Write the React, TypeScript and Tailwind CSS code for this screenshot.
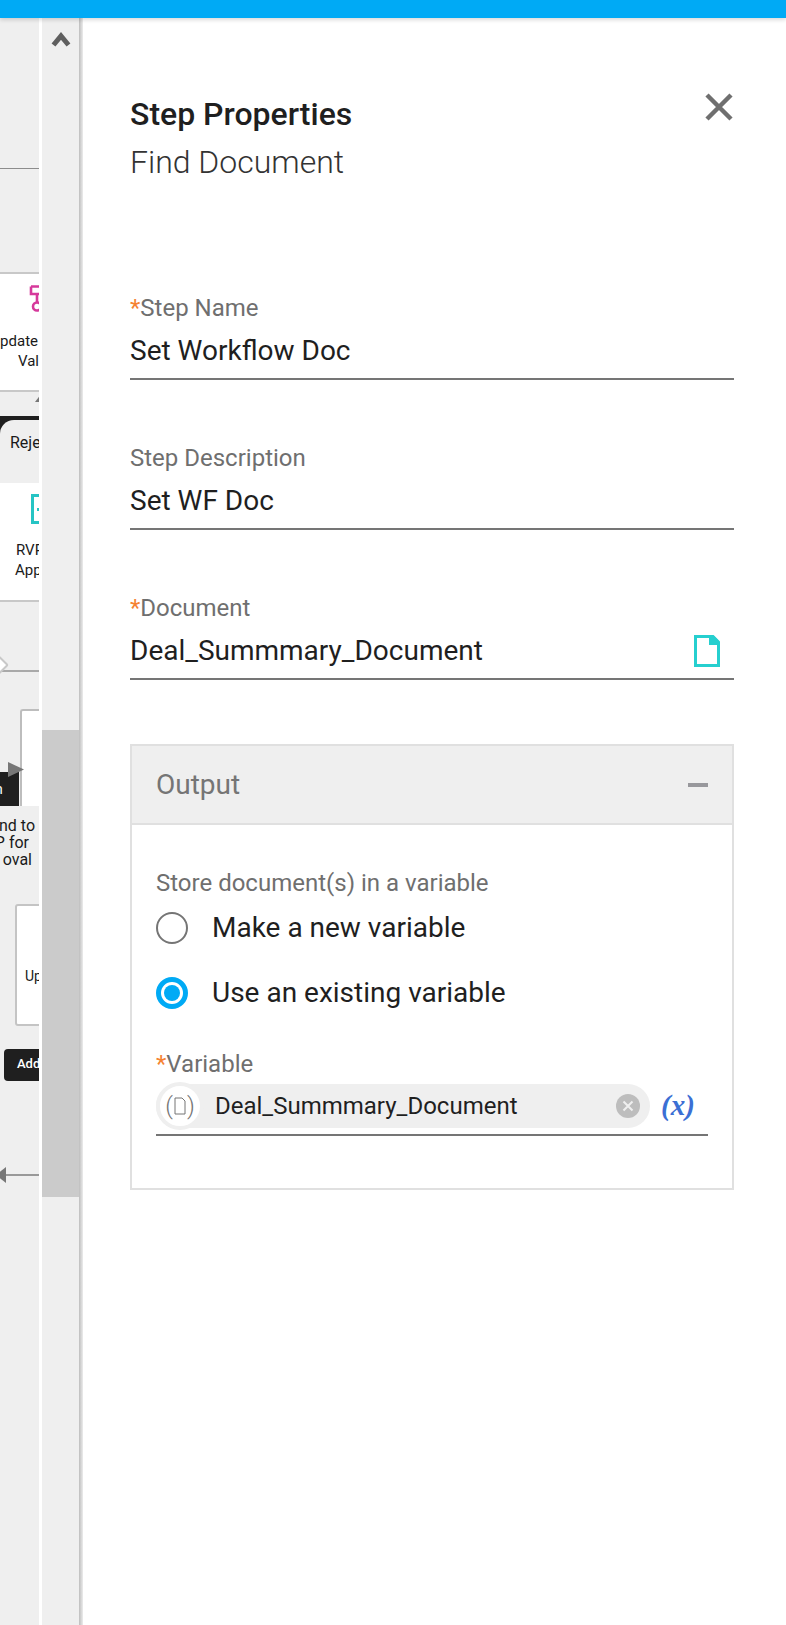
import React from "react";

const Req = () => <span className="text-[#f58232]">*</span>;

const Field = ({ label, value, required, icon }: { label: string; value: string; required?: boolean; icon?: React.ReactNode }) => (
  <div className="flex flex-col">
    <label className="text-[24px] leading-[28px] text-[#6f6f6f]">
      {required && <Req />}
      {label}
    </label>
    <div className="flex h-[58px] items-center justify-between border-b-2 border-[#757575] pt-[2px] text-[28px] text-[#1f1f1f]">
      <span>{value}</span>
      {icon}
    </div>
  </div>
);

const DocIcon = () => (
  <svg width="26" height="32" viewBox="0 0 26 32" className="mr-[14px]">
    <path d="M1.5 1.5H19L24.5 7V30.5H1.5Z" fill="none" stroke="#26cfcf" strokeWidth="3" />
    <path d="M15 1H20L25 6V10H15Z" fill="#26cfcf" />
  </svg>
);

const Radio = ({ label, checked }: { label: string; checked?: boolean }) => (
  <div className="flex h-[65px] items-center gap-[24px]">
    {checked ? (
      <span className="flex h-[32px] w-[32px] items-center justify-center rounded-full border-[5px] border-[#00aaf5]">
        <span className="h-[16px] w-[16px] rounded-full bg-[#00aaf5]" />
      </span>
    ) : (
      <span className="h-[32px] w-[32px] rounded-full border-2 border-[#757575]" />
    )}
    <span className="text-[28px] text-[#1f1f1f]">{label}</span>
  </div>
);

// workflow canvas cut off behind the scroll rail
const Canvas = () => (
  <div className="relative w-[39px] shrink-0 overflow-hidden bg-[#efefef] text-[15px] leading-[18px] text-[#1a1a1a]">
    <div className="absolute left-0 top-[150px] h-px w-full bg-[#8c8c8c]" />
    <div className="absolute left-0 top-[254px] h-[120px] w-full border-y-2 border-[#c8c8c8] bg-white" />
    <svg width="14" height="34" viewBox="0 0 14 34" className="absolute left-[29px] top-[267px]">
      <path d="M2 1.5H14M2 1.5V9H14M8 9V18" fill="none" stroke="#d6399b" strokeWidth="2.6" />
      <circle cx="8" cy="21.5" r="4" fill="none" stroke="#d6399b" strokeWidth="2.6" />
    </svg>
    <div className="absolute right-[1px] top-[314px] whitespace-nowrap">pdate</div>
    <div className="absolute right-0 top-[334px]">Val</div>
    <svg width="6" height="8" viewBox="0 0 6 8" className="absolute left-[35px] top-[376px]">
      <path d="M0 8L6 0V8Z" fill="#777" />
    </svg>
    <div className="absolute left-0 top-[398px] h-[68px] w-full border-b-2 border-[#c8c8c8] bg-[#1f1f1f]">
      <div className="mt-[4px] h-[64px] rounded-tl-[14px] bg-[#efefef] pl-[10px] pt-[14px] text-[16px]">Reje</div>
    </div>
    <div className="absolute left-0 top-[465px] h-[119px] w-full border-b-2 border-[#c8c8c8] bg-white">
      <div className="absolute left-[31px] top-[11px] h-[30px] w-[12px] border-[3px] border-[#26c4c4]" />
      <div className="absolute left-[37px] top-[25px] h-[3px] w-[2px] bg-[#26c4c4]" />
      <div className="absolute left-[16px] top-[58px] whitespace-nowrap">RVP</div>
      <div className="absolute left-[15px] top-[78px] whitespace-nowrap">App</div>
    </div>
    <div className="absolute left-0 top-[652px] h-[2px] w-full bg-[#a9a9a9]" />
    <div className="absolute -left-[8px] top-[640px] h-[14px] w-[14px] rotate-45 rounded-[2px] border-2 border-[#c8c8c8] bg-white" />
    <div className="absolute left-[20px] top-[691px] h-[97px] w-[30px] rounded-tl-[3px] border-l-2 border-t-2 border-[#bdbdbd] bg-white" />
    <div className="absolute left-0 top-[754px] h-[34px] w-[19px] bg-[#1f1f1f] text-[14px] text-white">
      <span className="absolute -left-[5px] top-[8px]">n</span>
    </div>
    <svg width="16" height="16" viewBox="0 0 16 16" className="absolute left-[8px] top-[744px]">
      <path d="M0 0L16 7.5L0 15Z" fill="#777" />
    </svg>
    <div className="absolute left-0 top-[788px] h-[12px] w-full rounded-tr-[6px] bg-[#efefef]" />
    <div className="absolute right-[4px] top-[799px] whitespace-nowrap text-[16px] leading-[17px]">nd to</div>
    <div className="absolute right-[10px] top-[816px] whitespace-nowrap text-[16px] leading-[17px]">VP for</div>
    <div className="absolute right-[7px] top-[833px] whitespace-nowrap text-[16px] leading-[17px]">oval</div>
    <div className="absolute left-[15px] top-[886px] h-[122px] w-[30px] rounded-[3px] border-2 border-[#c4c4c4] bg-white">
      <span className="absolute left-[8px] top-[61px] text-[14px]">Up</span>
    </div>
    <div className="absolute left-[4px] top-[1031px] h-[32px] w-[40px] rounded-[4px] bg-[#1f1f1f] pl-[13px] pt-[6px] text-[13px] font-medium text-white">
      Add
    </div>
    <div className="absolute left-0 top-[1156px] h-[2px] w-full bg-[#999]" />
    <svg width="6" height="16" viewBox="0 0 6 16" className="absolute left-0 top-[1149px]">
      <path d="M6 0V16L-4 8Z" fill="#777" />
    </svg>
  </div>
);

const ScrollRail = () => (
  <div className="ml-[3px] flex w-[37px] shrink-0 flex-col bg-[#efefef]">
    <div className="flex h-[712px] justify-center pt-[13px]">
      <svg width="20" height="16" viewBox="0 0 20 16">
        <path d="M2.5 14L10 5L17.5 14" fill="none" stroke="#5f5f5f" strokeWidth="5" />
      </svg>
    </div>
    <div className="h-[467px] w-full bg-[#cbcbcb]" />
  </div>
);

export default function App() {
  return (
    <div className="flex h-[1625px] w-[786px] flex-col overflow-hidden bg-white font-['Roboto',sans-serif]">
      <div className="relative z-10 h-[18px] shrink-0 bg-[#00aaf5] shadow-[0_2px_4px_rgba(0,0,0,0.15)]" />
      <div className="flex min-h-0 flex-1">
        <Canvas />
        <ScrollRail />
        <div className="w-[4px] shrink-0 bg-gradient-to-r from-[#bdbdbd] to-[#ececec]" />
        <div className="flex min-w-0 flex-1 flex-col pl-[47px] pr-[52px]">
          <div className="flex items-start justify-between pt-[78px]">
            <div>
              <h1 className="text-[32px] font-medium leading-[36px] text-[#1f1f1f]">Step Properties</h1>
              <p className="mt-[11px] text-[32px] font-light leading-[38px] text-[#333]">Find Document</p>
            </div>
            <button className="mt-[-4px]">
              <svg width="30" height="30" viewBox="0 0 30 30">
                <path d="M3 3L27 27M27 3L3 27" stroke="#6f6f6f" strokeWidth="4.5" />
              </svg>
            </button>
          </div>

          <div className="mt-[113px] flex flex-col gap-[64px]">
            <Field required label="Step Name" value="Set Workflow Doc" />
            <Field label="Step Description" value="Set WF Doc" />
            <Field required label="Document" value="Deal_Summmary_Document" icon={<DocIcon />} />
          </div>

          <div className="mt-[64px] border-2 border-[#e0e0e0]">
            <div className="flex h-[79px] items-center justify-between border-b-2 border-[#e0e0e0] bg-[#efefef] pl-[24px] pr-[24px]">
              <span className="text-[28px] text-[#757575]">Output</span>
              <span className="h-[4px] w-[20px] bg-[#98989c]" />
            </div>
            <div className="px-[24px] pb-[52px] pt-[44px]">
              <div className="text-[24px] leading-[28px] text-[#6f6f6f]">Store document(s) in a variable</div>
              <div className="-mt-[2px]">
                <Radio label="Make a new variable" />
                <Radio checked label="Use an existing variable" />
              </div>
              <div className="mt-[25px] text-[24px] leading-[28px] text-[#6f6f6f]">
                <Req />
                Variable
              </div>
              <div className="flex h-[58px] items-center border-b-2 border-[#757575]">
                <div className="flex h-[44px] w-[494px] items-center rounded-full bg-[#efefef] pr-[10px]">
                  <div className="flex h-[48px] w-[48px] shrink-0 items-center justify-center rounded-full border-4 border-[#efefef] bg-white text-[24px] font-light text-[#757575]">
                    (
                    <svg width="12" height="18" viewBox="0 0 12 18" className="mx-[1px]">
                      <path d="M1 1H8L11 4V17H1Z" fill="none" stroke="#757575" strokeWidth="1" />
                    </svg>
                    )
                  </div>
                  <span className="ml-[11px] flex-1 text-[24px] text-[#1f1f1f]">Deal_Summmary_Document</span>
                  <span className="flex h-[24px] w-[24px] items-center justify-center rounded-full bg-[#bdbdbd]">
                    <svg width="12" height="12" viewBox="0 0 12 12">
                      <path d="M1.5 1.5L10.5 10.5M10.5 1.5L1.5 10.5" stroke="#efefef" strokeWidth="2" />
                    </svg>
                  </span>
                </div>
                <span className="ml-[11px] font-['Liberation_Serif',serif] text-[29px] font-bold italic text-[#3b6fd4]">(x)</span>
              </div>
            </div>
          </div>
        </div>
      </div>
    </div>
  );
}
